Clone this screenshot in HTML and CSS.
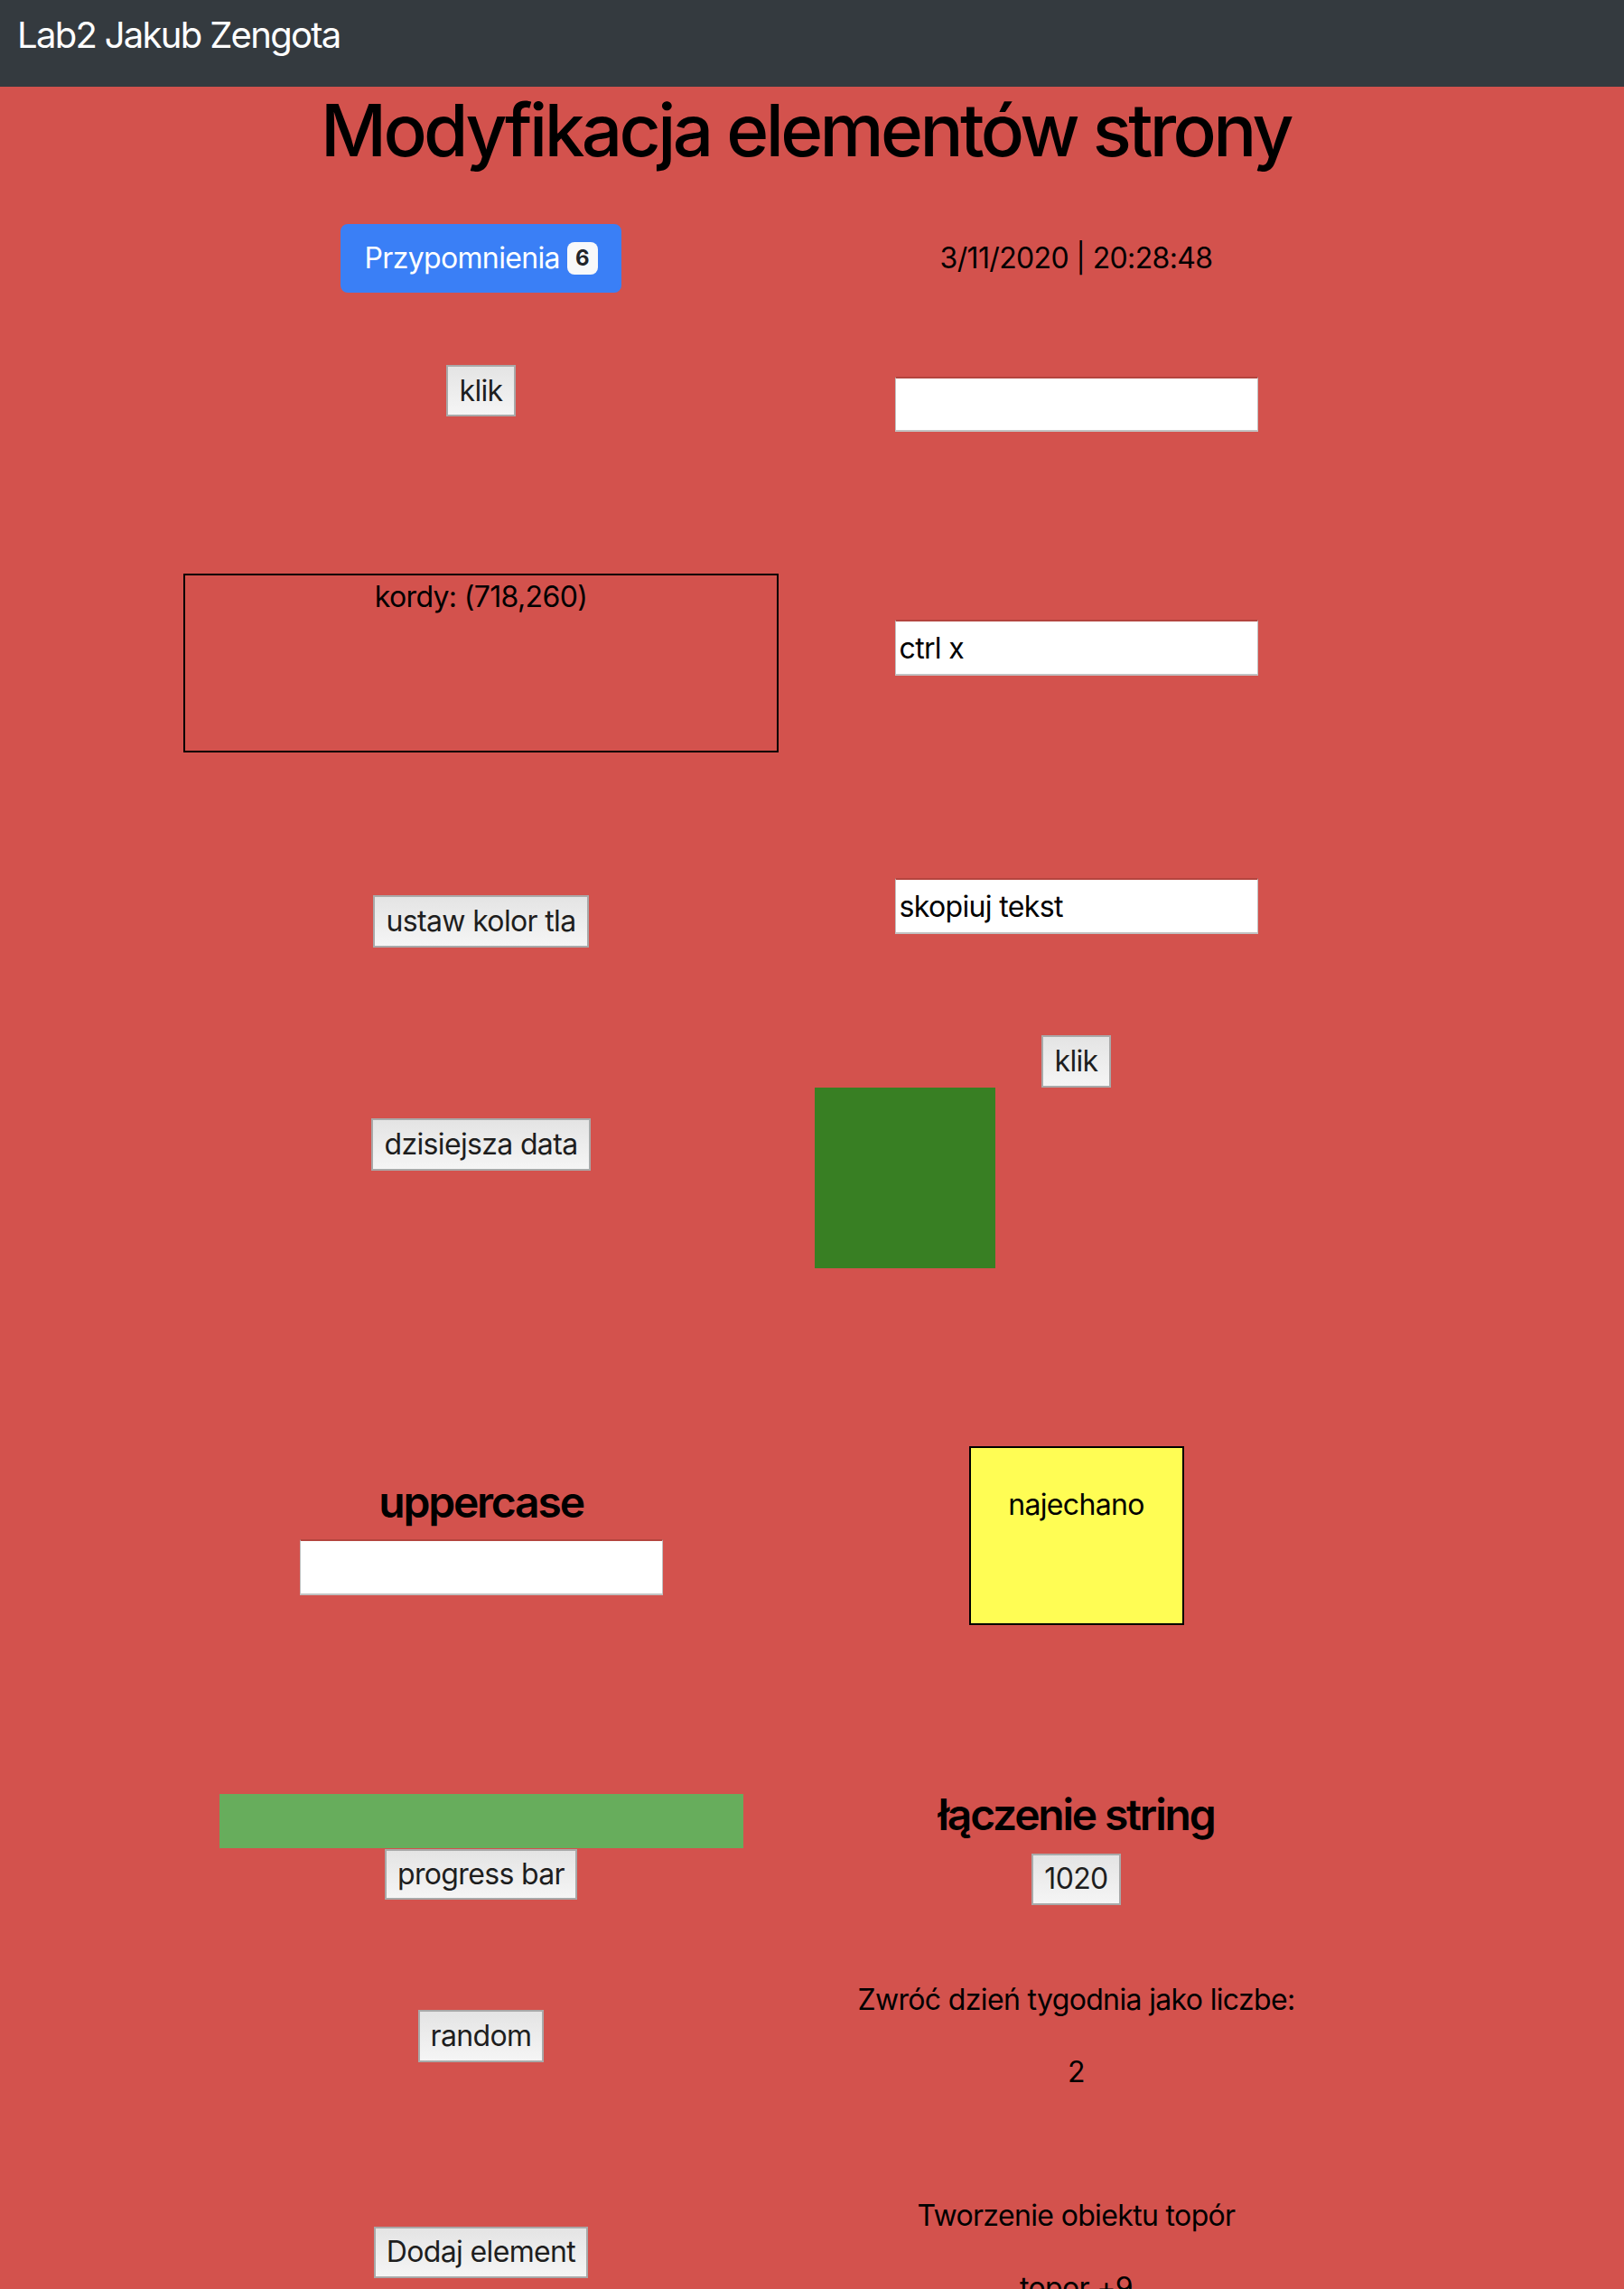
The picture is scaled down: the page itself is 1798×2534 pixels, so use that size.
FILE: index.html
```html
<!DOCTYPE html>
<html lang="pl">
<head>
<meta charset="utf-8">
<title>Lab2 Jakub Zengota</title>
<link rel="stylesheet" href="styles.css">
</head>
<body>
<nav class="navbar"><span class="brand">Lab2 Jakub Zengota</span></nav>
<h1 class="title">Modyfikacja elementów strony</h1>
<main class="board">
  <section class="col col-left">
    <button class="btn-primary reminders">Przypomnienia <span class="badge">6</span></button>
    <button class="btn klik-left">klik</button>
    <div class="coords">kordy: (718,260)</div>
    <button class="btn bg-btn">ustaw kolor tla</button>
    <button class="btn date-btn">dzisiejsza data</button>
    <h4 class="sub upper-title">uppercase</h4>
    <input class="field upper-field" type="text">
    <div class="progress"></div>
    <button class="btn progress-btn">progress bar</button>
    <button class="btn random-btn">random</button>
    <button class="btn add-btn">Dodaj element</button>
  </section>
  <section class="col col-right">
    <div class="clock">3/11/2020 | 20:28:48</div>
    <input class="field field-1" type="text">
    <input class="field field-cut" type="text" value="ctrl x">
    <input class="field field-copy" type="text" value="skopiuj tekst">
    <button class="btn klik-right">klik</button>
    <div class="green-box"></div>
    <div class="hover-box">najechano</div>
    <h4 class="sub concat-title">łączenie string</h4>
    <button class="btn concat-btn">1020</button>
    <p class="line weekday-label">Zwróć dzień tygodnia jako liczbe:</p>
    <p class="line weekday-value">2</p>
    <p class="line axe-label">Tworzenie obiektu topór</p>
    <p class="line axe-value">topor +9</p>
  </section>
</main>
</body>
</html>
```
FILE: styles.css
```css
body {
  margin: 0;
  background: #d3524d;
  font-family: Inter, "Liberation Sans", Arial, sans-serif;
  font-size: 32px;
  line-height: 1.5;
  letter-spacing: -0.65px;
  color: #000;
}

.navbar {
  box-sizing: border-box;
  height: 96px;
  padding: 9px 19px 0;
  background: #343a3f;
}

.brand {
  display: block;
  font-size: 40px;
  line-height: 60px;
  letter-spacing: -1.7px;
  color: #fff;
}

.title {
  margin: 0 0 16px;
  padding-right: 14px;
  font-size: 80px;
  font-weight: 500;
  line-height: 1.2;
  letter-spacing: -3.6px;
  text-align: center;
}

.board {
  display: grid;
  grid-template-columns: 659px 659px;
  margin-left: 203px;
}

.col {
  display: flex;
  flex-direction: column;
  align-items: center;
}

button, input {
  font-family: inherit;
  font-size: 32px;
  line-height: 48px;
  letter-spacing: -0.65px;
}

.btn-primary {
  box-sizing: border-box;
  height: 76px;
  padding: 0 24px;
  border: 2px solid #3a7ff6;
  border-radius: 8px;
  background: #3a7ff6;
  color: #fff;
  display: flex;
  align-items: center;
}

.badge {
  display: inline-block;
  margin-left: 8px;
  padding: 0 9px;
  height: 36px;
  line-height: 36px;
  border-radius: 8px;
  background: #f8f9fa;
  color: #212529;
  font-size: 24px;
  font-weight: 700;
  letter-spacing: 0;
}

.btn {
  box-sizing: border-box;
  height: 57px;
  padding: 0 12px;
  border: 2px solid #a9a9a9;
  background: linear-gradient(#e4e4e4, #f5f5f5);
  color: #1e1e1e;
}

.field {
  box-sizing: border-box;
  width: 402px;
  height: 62px;
  padding: 0 4px;
  border: 2px solid #c2c2c2;
  border-top-color: #b4453f;
  border-left-width: 1px;
  border-right-width: 1px;
  background: #fff;
  color: #000;
}

.reminders { margin-top: 40px; }
.klik-left { margin-top: 80px; }

.coords {
  box-sizing: border-box;
  width: 659px;
  height: 198px;
  margin-top: 174px;
  border: 2px solid #000;
  text-align: center;
}

.bg-btn { margin-top: 158px; height: 58px; }
.date-btn { margin-top: 189px; height: 58px; }

.sub {
  margin: 0;
  font-size: 48px;
  font-weight: 600;
  line-height: 1.2;
  letter-spacing: -2.2px;
}

.upper-title { margin-top: 338px; margin-bottom: 12px; }

.progress {
  width: 580px;
  height: 60px;
  margin-top: 220px;
  background: #67ad5c;
}

.progress-btn { margin-top: 1px; height: 56px; }
.random-btn { margin-top: 122px; height: 58px; }
.add-btn { margin-top: 182px; }

.clock { margin-top: 54px; }
.field-1 { margin-top: 107px; height: 61px; }
.field-cut { margin-top: 208px; }
.field-copy { margin-top: 224px; }
.klik-right { margin-top: 112px; height: 58px; }

.green-box {
  align-self: flex-start;
  width: 200px;
  height: 200px;
  margin-left: 40px;
  background: #387f23;
}

.hover-box {
  box-sizing: border-box;
  width: 238px;
  height: 198px;
  margin-top: 197px;
  padding-top: 39px;
  border: 2px solid #000;
  background: #fffd54;
  text-align: center;
}

.concat-title { margin-top: 181px; margin-bottom: 14px; }

.line { margin: 0 0 32px; }
.weekday-label { margin-top: 81px; }
.axe-label { margin-top: 79px; }
```
